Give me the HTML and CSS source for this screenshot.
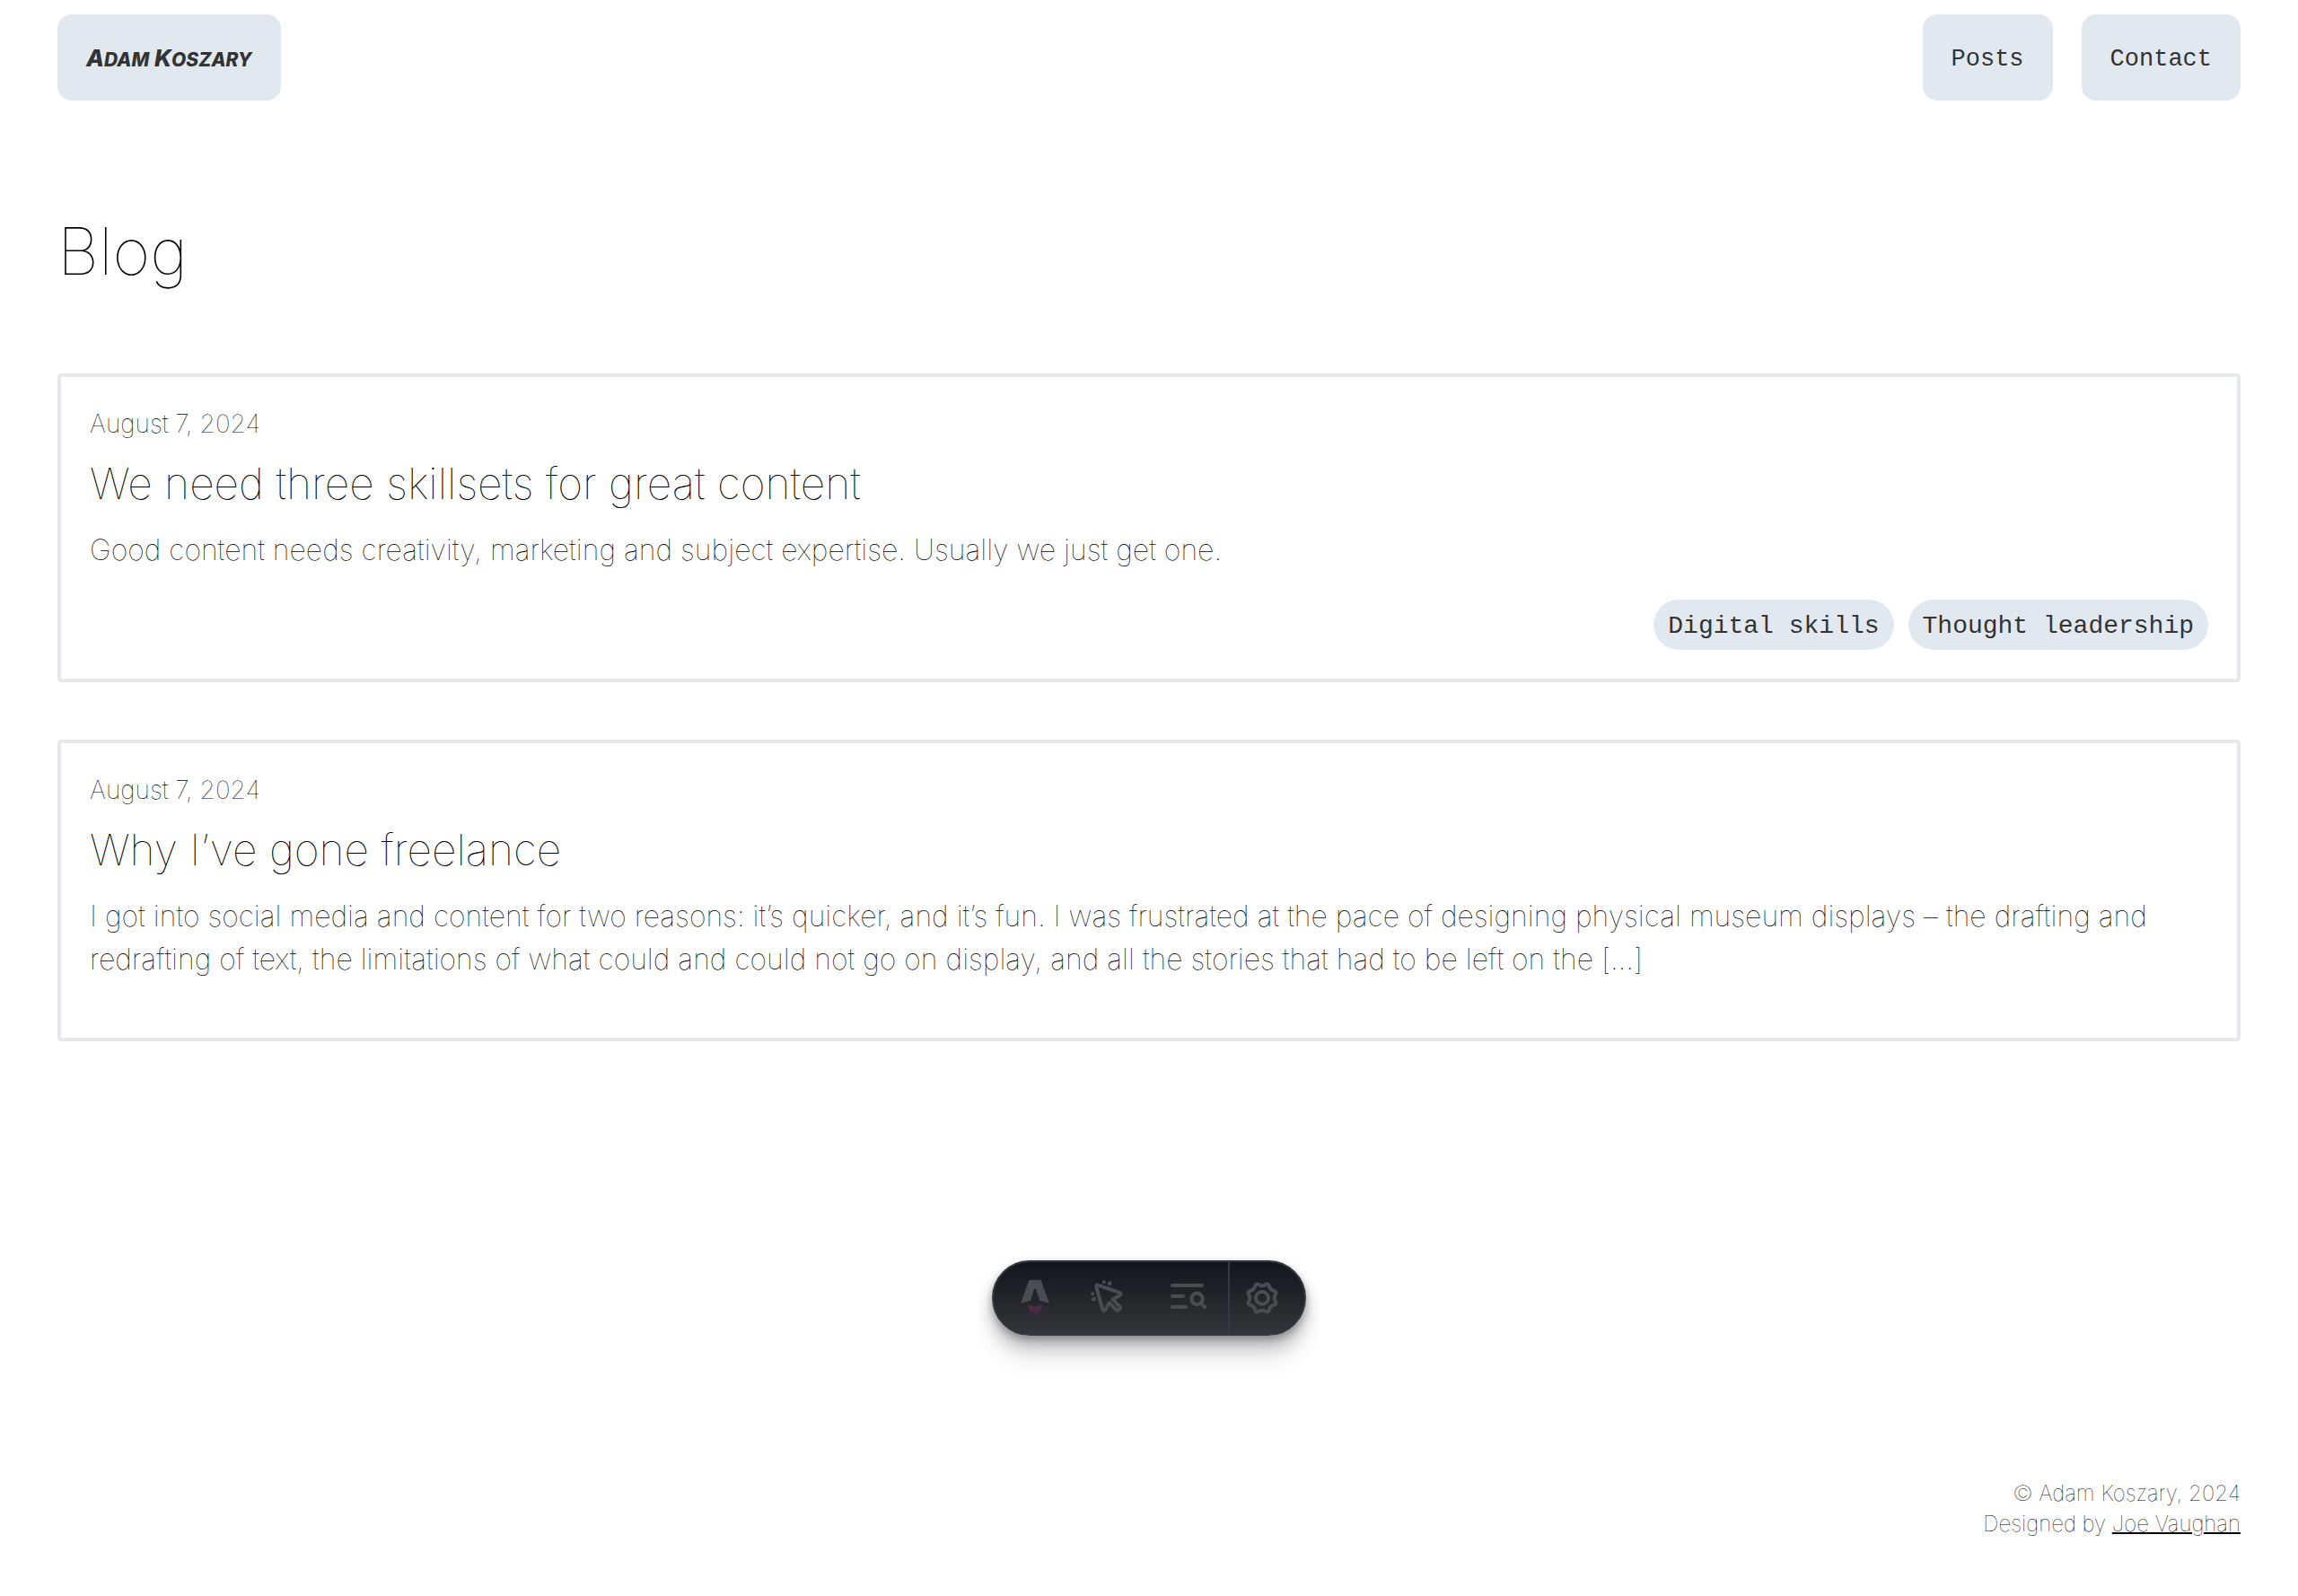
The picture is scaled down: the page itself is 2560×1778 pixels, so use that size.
FILE: index.html
```
<!DOCTYPE html>
<html lang="en">
<head>
<meta charset="utf-8">
<meta name="viewport" content="width=device-width, initial-scale=1">
<title>Blog | Adam Koszary</title>
<link rel="stylesheet" href="styles.css">
</head>
<body>
<header class="site-header">
  <a class="nav-link brand" href="#"><span class="brand-name">A<span class="caps">dam</span> K<span class="caps">oszary</span></span></a>
  <nav class="site-nav">
    <a class="nav-link" href="#">Posts</a>
    <a class="nav-link" href="#">Contact</a>
  </nav>
</header>
<main class="content">
  <h1 class="page-title">Blog</h1>
  <div class="posts">
    <article class="post">
      <time class="post-date" datetime="2024-08-07">August 7, 2024</time>
      <h2 class="post-title">We need three skillsets for great content</h2>
      <p class="post-excerpt">Good content needs creativity, marketing and subject expertise. Usually we just get one.</p>
      <ul class="tags">
        <li class="tag">Digital skills</li>
        <li class="tag">Thought leadership</li>
      </ul>
    </article>
    <article class="post">
      <time class="post-date" datetime="2024-08-07">August 7, 2024</time>
      <h2 class="post-title">Why I’ve gone freelance</h2>
      <p class="post-excerpt">I got into social media and content for two reasons: it’s quicker, and it’s fun. I was frustrated at the pace of designing physical museum displays – the drafting and redrafting of text, the limitations of what could and could not go on display, and all the stories that had to be left on the […]</p>
      <ul class="tags"></ul>
    </article>
  </div>
</main>
<footer class="site-footer">
  <p>© Adam Koszary, 2024</p>
  <p>Designed by <a class="credit" href="#">Joe Vaughan</a></p>
</footer>
<div class="toolbar-dock">
  <div class="toolbar">
    <button class="tool" type="button" aria-label="Menu">
      <svg viewBox="0 0 88 80" aria-hidden="true">
        <defs><linearGradient id="flame" x1="0" x2="1"><stop offset="0" stop-color="#522a3a"/><stop offset="1" stop-color="#482a55"/></linearGradient></defs>
        <path fill="#4b4c50" d="M40.500 20h11q1 0 1.500 1.200L62 46q-5-2-10.500-3L47 30.500q-1-1.500-2 0L41 43q-5 1-11 3l9-24.800q.5-1.200 1.500-1.200z"/>
        <path fill="url(#flame)" d="M38.500 47c4 3 11 3 15.500.5.500 4-1 6.500-3.500 8-2 1.500-2.500 2.500-2 5-2.500-1-3.500-3-3-5.500-1.500 0-2 .5-2 2.500-3-2-5.500-6-5-10.500z"/>
      </svg>
    </button>
    <button class="tool" type="button" aria-label="Inspect">
      <svg viewBox="0 0 88 80" class="line" aria-hidden="true">
        <path d="M29.500 25.800l23.500 8c2.300.8 2.300 2.300.2 3.500l-7.700 4.200 7.800 7.800c2 2-1.800 5.800-3.800 3.800l-7.800-7.800-4.200 7.700c-1.200 2.100-2.700 1.600-3.300-.5l-6.700-24.300c-.6-2 .2-3 2-2.400z"/>
        <path d="M35.800 22.300v-.1M42.500 23.200l-.5 1.300M23 35.200h.1M25.200 41l-1.400.4"/>
      </svg>
    </button>
    <button class="tool" type="button" aria-label="Audit">
      <svg viewBox="0 0 88 80" class="line" aria-hidden="true">
        <path d="M25 26h33M25 38h12M25 50h15M57 46l4 4"/><circle cx="52.500" cy="41" r="6.200"/>
      </svg>
    </button>
    <button class="tool tool-settings" type="button" aria-label="Settings">
      <svg viewBox="0 0 84 80" class="line" aria-hidden="true">
        <g transform="translate(36 40)">
          <circle r="7"/>
          <path d="M14.800 3.540Q17.090 7.080 12.970 7.960 8.840 8.840 7.960 12.970 7.080 17.090 3.540 14.800 0 12.500-3.540 14.800-7.080 17.090-7.960 12.970-8.840 8.840-12.970 7.960-17.090 7.080-14.800 3.540-12.500 0-14.800-3.540-17.090-7.080-12.970-7.960-8.840-8.840-7.960-12.970-7.080-17.090-3.540-14.800 0-12.500 3.540-14.800 7.080-17.090 7.960-12.970 8.840-8.840 12.970-7.960 17.090-7.080 14.800-3.540 12.500 0 14.800 3.540z"/>
        </g>
      </svg>
    </button>
  </div>
</div>
</body>
</html>
```

FILE: styles.css
```
* { box-sizing: border-box; margin: 0; padding: 0; }
body {
  min-height: 100vh;
  display: flex;
  flex-direction: column;
  background: #fff;
  color: #000;
  font: 100 32px/48px Inter, sans-serif;
}
.site-header { display: flex; justify-content: space-between; padding: 16px 64px; }
.site-nav { display: flex; gap: 32px; }
.nav-link {
  display: flex;
  align-items: center;
  height: 96px;
  padding: 4px 32px 0;
  border-radius: 16px;
  background: #e2e8f0;
  color: #333;
  font: 400 27px/40px "Liberation Mono", monospace;
  text-decoration: none;
}
.brand { font: italic 800 26px/40px Inter, sans-serif; }
.caps { font-size: 21px; text-transform: uppercase; }
.content { padding: 108px 64px 64px; }
.page-title { font-size: 72px; font-weight: 100; line-height: 88px; margin-bottom: 92px; }
.posts { display: flex; flex-direction: column; gap: 64px; }
.post { padding: 32px; border: 4px solid #e5e7eb; border-radius: 4px; }
.post-date { display: block; font-size: 28px; line-height: 40px; margin-bottom: 17px; }
.post-title { font-size: 48px; font-weight: 100; line-height: 60px; margin-bottom: 20px; }
.post-excerpt { margin-bottom: 31px; }
.tags { display: flex; justify-content: flex-end; gap: 16px; list-style: none; }
.tag {
  padding: 10px 16px 6px;
  border-radius: 28px;
  background: #e2e8f0;
  color: #333;
  font: 400 28px/40px "Liberation Mono", monospace;
}
.site-footer { margin-top: auto; padding: 0 64px 63px; text-align: right; font-size: 24px; line-height: 34px; }
.credit { color: #000; text-decoration-thickness: 2px; }
.toolbar-dock { position: fixed; bottom: 290px; left: 0; right: 0; display: flex; justify-content: center; }
.toolbar {
  display: flex;
  height: 84px;
  overflow: hidden;
  border: 2px solid #343841;
  border-radius: 42px;
  background: linear-gradient(#13151a, #343538);
  box-shadow: 0 4px 8px rgba(19, 21, 26, .3), 0 12px 20px rgba(19, 21, 26, .25), 0 28px 28px rgba(19, 21, 26, .08);
}
.tool { width: 87px; border: 0; background: none; }
.tool svg { display: block; width: 88px; height: 80px; }
.tool-settings { width: 85px; border-left: 2px solid #343841; }
.tool-settings svg { width: 84px; }
.line { fill: none; stroke: #4b4c50; stroke-width: 4; stroke-linecap: round; stroke-linejoin: round; }
```
